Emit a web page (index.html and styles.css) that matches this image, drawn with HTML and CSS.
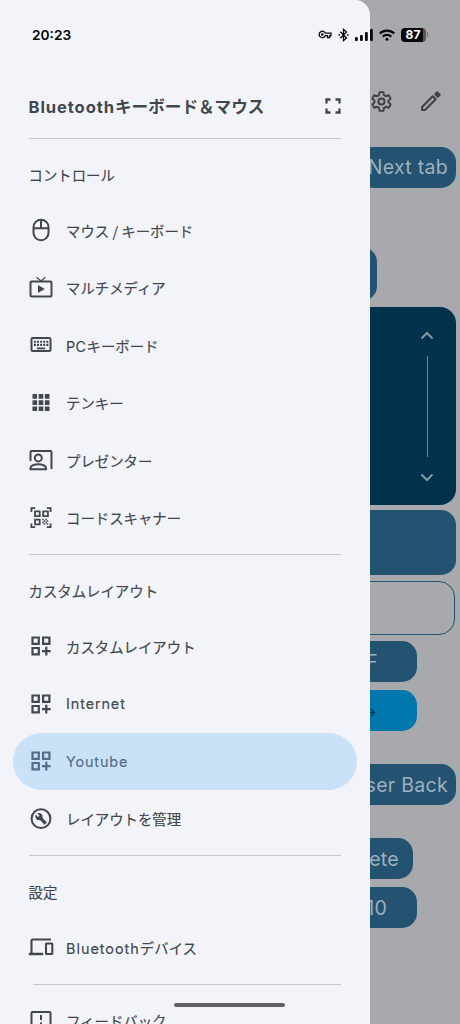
FILE: index.html
```html
<!DOCTYPE html>
<html lang="ja">
<head>
<meta charset="utf-8">
<title>Bluetoothキーボード＆マウス</title>
<link rel="stylesheet" href="styles.css">
</head>
<body>
<svg class="defs" width="0" height="0">
  <symbol id="layout" viewBox="0 0 24 24"><path d="M3.500 3.500h6.300v6.300H3.500zM14.100 3.500h6.300v6.300h-6.300zM3.500 14h6.300v6.300H3.500zM17.300 12.800v8.600M13 17.100h8.600" fill="none" stroke="currentColor" stroke-width="2.200"/></symbol>
</svg>
<div class="screen">
  <main class="remote">
    <div class="toolbar">
      <svg class="tool" viewBox="0 0 24 24" fill="none" stroke="currentColor" stroke-width="2" stroke-linejoin="round"><path d="M10 2.200h4l.6 3.100 2 1.200 3-1 2 3.500-2.300 2.100v1.800l2.300 2.100-2 3.500-3-1-2 1.200-.6 3.100h-4l-.6-3.100-2-1.200-3 1-2-3.500 2.300-2.100v-1.800L2.400 9l2-3.500 3 1 2-1.200z"/><circle cx="12" cy="12" r="3.200"/></svg>
      <svg class="tool" viewBox="0 0 24 24" fill="none" stroke="currentColor" stroke-width="2.100" stroke-linejoin="round"><path d="M3.200 20.800v-3.100L14.300 6.600l3.100 3.100L6.300 20.800z"/><path d="M17 4.400l2-2 2.600 2.600-2 2z" fill="currentColor"/></svg>
    </div>
    <div class="key next"><span>Next tab</span></div>
    <div class="key stub"></div>
    <div class="pad">
      <svg class="chev" viewBox="0 0 14 8"><path d="M1.500 7 7 1.500 12.500 7"/></svg>
      <div class="track"></div>
      <svg class="chev" viewBox="0 0 14 8"><path d="M1.500 1 7 6.500 12.500 1"/></svg>
    </div>
    <div class="key wide"></div>
    <div class="field"></div>
    <div class="key fkey"><span>F</span></div>
    <div class="key arrow"><svg viewBox="0 0 12 10"><path d="M0 5h10M6 1l4 4-4 4" fill="none" stroke="currentColor" stroke-width="1.600"/></svg></div>
    <div class="key back"><span>Browser Back</span></div>
    <div class="key delete"><span>Delete</span></div>
    <div class="key ften"><span>F10</span></div>
  </main>

  <nav class="drawer">
    <header class="head">
      <h1 class="title"><span class="brand">Bluetooth</span>キーボード＆マウス</h1>
      <svg class="expand" viewBox="0 0 16 16"><path d="M1.500 5.500v-4h4M10.500 1.500h4v4M14.500 10.500v4h-4M5.500 14.500h-4v-4" fill="none" stroke="currentColor" stroke-width="2.300"/></svg>
    </header>
    <hr class="rule">
    <h2 class="section first">コントロール</h2>
    <div class="item"><svg class="icon" viewBox="0 0 24 24" fill="none" stroke="currentColor" stroke-width="2"><rect x="4.500" y="1.700" width="15" height="20.600" rx="7.500"/><path d="M4.500 10.200h15M12 1.700v8.500"/></svg><span>マウス / キーボード</span></div>
    <div class="item"><svg class="icon" viewBox="0 0 24 24" fill="none" stroke="currentColor" stroke-width="2"><rect x="1.500" y="5.500" width="21" height="15" rx="1"/><path d="M7.500 1.200 12 5l4.500-3.800" stroke-width="1.200"/><path d="M9 9v8l6.800-4z" fill="currentColor" stroke="none"/></svg><span>マルチメディア</span></div>
    <div class="item"><svg class="icon" viewBox="0 0 24 24" fill="none" stroke="currentColor"><rect x="2.500" y="5" width="19" height="13" rx="1.300" stroke-width="2"/><path d="M4.900 8.700h14.500M4.900 11.900h14.500" stroke-width="2.100" stroke-dasharray="2 1.100"/><path d="M8 15.400h8" stroke-width="1.800"/></svg><span><span class="latin pc">PC</span>キーボード</span></div>
    <div class="item"><svg class="icon" viewBox="0 0 24 24" fill="currentColor"><path d="M3.500 3.100h4.600v4.600H3.500zM9.700 3.100h4.600v4.600H9.700zM15.900 3.100h4.600v4.600h-4.600zM3.500 9.300h4.600v4.600H3.500zM9.700 9.300h4.600v4.600H9.700zM15.900 9.300h4.600v4.600h-4.600zM3.500 15.500h4.600v4.600H3.500zM9.700 15.500h4.600v4.600H9.700zM15.900 15.500h4.600v4.600h-4.600z"/></svg><span>テンキー</span></div>
    <div class="item"><svg class="icon" viewBox="0 0 24 24" fill="none" stroke="currentColor" stroke-width="2"><path d="M1.500 13V4q0-1 1-1h19q1 0 1 1v17M1.500 21.200h15.500v-1.300c0-2.200-4-3.600-7.700-3.600s-7.800 1.400-7.800 3.600z"/><circle cx="9.300" cy="9.900" r="3.500"/></svg><span>プレゼンター</span></div>
    <div class="item"><svg class="icon" viewBox="0 0 24 24" fill="none" stroke="currentColor" stroke-width="1.800"><path d="M2.400 6V2.200h3.800M17.800 2.200h3.800V6M21.600 17.400v3.800h-3.800M6.200 21.200H2.400v-3.800M6 5.400h4.700v4.700H6zM14.200 5.400h4.700v4.700h-4.700zM6 13.600h4.700v4.700H6z"/><path d="M13.200 13.500h1.500m1.500 0h1.500M14.700 15h1.500m1.500 0h1.500M13.200 16.500h1.500m1.500 0h1.500M14.700 18h1.500m1.500 0h1.500" stroke-width="1.500"/></svg><span>コードスキャナー</span></div>
    <hr class="rule spaced">
    <h2 class="section">カスタムレイアウト</h2>
    <div class="item"><svg class="icon"><use href="#layout"/></svg><span>カスタムレイアウト</span></div>
    <div class="item"><svg class="icon"><use href="#layout"/></svg><span class="latin net">Internet</span></div>
    <div class="item selected"><svg class="icon"><use href="#layout"/></svg><span class="latin tube">Youtube</span></div>
    <div class="item"><svg class="icon" viewBox="0 0 24 24" fill="none" stroke="currentColor"><circle cx="12" cy="11.700" r="9.400" stroke-width="2"/><path d="M6.600 7.600 9 10 10.500 8.600 8.200 6.200c2.900-1.100 6.200 1.300 5.200 4.600l4.500 4.600-2.300 2.300-4.600-4.600C7.700 14 5.500 10.700 6.600 7.600z" fill="currentColor" stroke="none"/></svg><span>レイアウトを管理</span></div>
    <hr class="rule spaced">
    <h2 class="section">設定</h2>
    <div class="item"><svg class="icon devices" viewBox="0 0 26 24" fill="none" stroke="currentColor" stroke-width="2.100"><path d="M23 4.500H4.500q-1 0-1 1V18"/><path d="M.8 19h14.400" stroke-width="2.500"/><rect x="18" y="8.500" width="6.300" height="10.500" rx=".5"/></svg><span><span class="latin blue">Bluetooth</span>デバイス</span></div>
    <hr class="rule inset">
    <div class="item"><svg class="icon" viewBox="0 0 24 24" fill="none" stroke="currentColor" stroke-width="2"><path d="M2.500 22V4q0-1 1-1h17q1 0 1 1v14h-15z"/><path d="M12 6v5M12 13.500v2"/></svg><span>フィードバック</span></div>
  </nav>

  <div class="status">
    <span class="clock">20:23</span>
    <div class="signals">
      <svg class="vpn" viewBox="0 0 14 9" fill="none" stroke="currentColor" stroke-width="1.300"><path d="M7.300 3.200H13v2.500h-1.200v1.800H9.500V5.700H7.300a3.200 3.200 0 1 1 0-2.500z"/><circle cx="4.300" cy="4.500" r=".7"/></svg>
      <svg class="bt" viewBox="0 0 11 14" fill="none" stroke="currentColor" stroke-width="1.300"><path d="M2.300 3.800 8.500 10 5.500 12.600V1.400L8.500 4 2.300 10.200"/><path d="M.5 7h1.500M9 7h1.500"/></svg>
      <svg class="bars" viewBox="0 0 18 12" fill="currentColor"><rect y="8" width="2.800" height="4" rx="1"/><rect x="5" y="6" width="2.800" height="6" rx="1"/><rect x="10" y="3" width="2.800" height="9" rx="1"/><rect x="15" width="2.800" height="12" rx="1"/></svg>
      <svg class="wifi" viewBox="0 0 16 12" fill="none" stroke="currentColor" stroke-width="2.200"><path d="M.8 4.500a10.300 10.300 0 0 1 14.400 0M3.700 7.600a6.200 6.200 0 0 1 8.600 0"/><circle cx="8" cy="10.300" r="1.500" fill="currentColor" stroke="none"/></svg>
      <div class="battery"><span class="charge">87</span><i class="tip"></i></div>
    </div>
  </div>
  <div class="homebar"></div>
</div>
</body>
</html>
```

FILE: styles.css
```css
* { box-sizing: border-box; }
body { margin: 0; font-family: "Noto Sans CJK JP", sans-serif; }
.defs { position: absolute; }
.screen { position: relative; width: 460px; height: 1024px; overflow: hidden; background: #a8a9ac; }

/* dimmed page behind the drawer */
.remote { display: flex; flex-direction: column; align-items: flex-end; padding: 90px 4px 0 0; }
.toolbar { display: flex; gap: 26px; height: 56.500px; padding-right: 14px; color: #3e4045; }
.tool { width: 23px; height: 23px; }
.key { flex: none; display: flex; align-items: center; justify-content: flex-end; height: 41px; border-radius: 15px; background: #235370; color: #9fb0bf; font: 19.500px Inter, sans-serif; letter-spacing: .3px; white-space: nowrap; }
.next { width: 98px; padding-right: 8px; }
.stub { width: 50px; height: 54px; margin: 59.500px 79px 6px 0; }
.pad { width: 446px; height: 198px; border-radius: 16px; background: #00324b; display: flex; flex-direction: column; align-items: flex-end; padding: 24px 22px 0 0; color: #8299a8; }
.chev { width: 14px; height: 9px; fill: none; stroke: currentColor; stroke-width: 2; }
.track { width: 1.500px; height: 101px; margin: 16px 6px; background: #71899a; }
.wide { width: 446px; height: 65px; margin-top: 5px; }
.field { width: 445px; height: 54px; margin: 6px 1px 6px 0; border: 1.500px solid #235370; border-radius: 16px; }
.fkey { width: 90px; padding-right: 39px; margin-right: 39px; }
.arrow { width: 90px; margin: 8px 39px 33px 0; padding-right: 40px; background: #0078ad; color: #003955; }
.arrow svg { width: 12px; height: 9px; margin-top: 4px; }
.back { width: 150px; padding-right: 8px; }
.delete { width: 90px; margin: 33px 43px 8px 0; padding-right: 14px; }
.ften { width: 90px; margin-right: 39px; padding-right: 30px; }

/* navigation drawer */
.drawer { position: absolute; left: 0; top: 0; width: 369.500px; height: 1024px; overflow: hidden; padding: 75px 12.500px 0; border-radius: 0 15px 0 0; background: #f2f4f9; color: #42474d; }
.head { display: flex; align-items: center; justify-content: space-between; height: 63px; padding: 0 16px 2px; }
.title { margin: 2px 0 0; font-size: 16.600px; font-weight: 700; line-height: 24px; white-space: nowrap; }
.brand { font-family: Inter, sans-serif; font-weight: 700; letter-spacing: .9px; }
.expand { width: 16px; height: 16px; }
.rule { height: 1px; margin: 0 16px; border: 0; background: #c6c8cd; }
.spaced { margin-top: 7.500px; }
.inset { margin: 7.500px 16px 7.500px 20px; }
.section { height: 62.500px; margin: 0; padding: 0 16px; font-size: 14.400px; font-weight: 400; line-height: 72px; -webkit-text-stroke: .15px currentColor; }
.first { line-height: 71px; }
.item { display: flex; align-items: center; gap: 13px; height: 57.500px; padding-left: 16.500px; border-radius: 29px; font-size: 14.400px; white-space: nowrap; -webkit-text-stroke: .15px currentColor; }
.icon { flex: none; width: 24px; height: 24px; }
.devices { width: 26px; margin: 0 -1px; }
.latin { font-family: Inter, sans-serif; letter-spacing: .9px; }
.pc { letter-spacing: .4px; }
.tube { letter-spacing: .85px; }
.blue { letter-spacing: 1px; }
.selected { background: #cae2f8; color: #536f87; }

/* system overlays */
.status { position: absolute; left: 32px; right: 32px; top: 24px; height: 21px; display: flex; align-items: center; justify-content: space-between; color: #08090b; }
.clock { font: 600 13.700px Inter, sans-serif; }
.signals { display: flex; align-items: center; gap: 6px; }
.vpn { width: 14px; height: 9px; }
.bt { width: 11px; height: 14px; }
.bars { width: 18px; height: 12px; }
.wifi { width: 16px; height: 12px; }
.battery { display: flex; align-items: center; gap: 1px; }
.charge { width: 25px; height: 14px; border-radius: 4px; background: linear-gradient(90deg, #08090b 87%, #55565a 87%); color: #fff; font: 700 12px/14px Inter, sans-serif; text-align: center; }
.tip { width: 1.500px; height: 5px; border-radius: 0 1px 1px 0; background: #66676a; }
.homebar { position: absolute; left: 174px; top: 1003px; width: 111px; height: 4px; border-radius: 2px; background: #606268; }
```
